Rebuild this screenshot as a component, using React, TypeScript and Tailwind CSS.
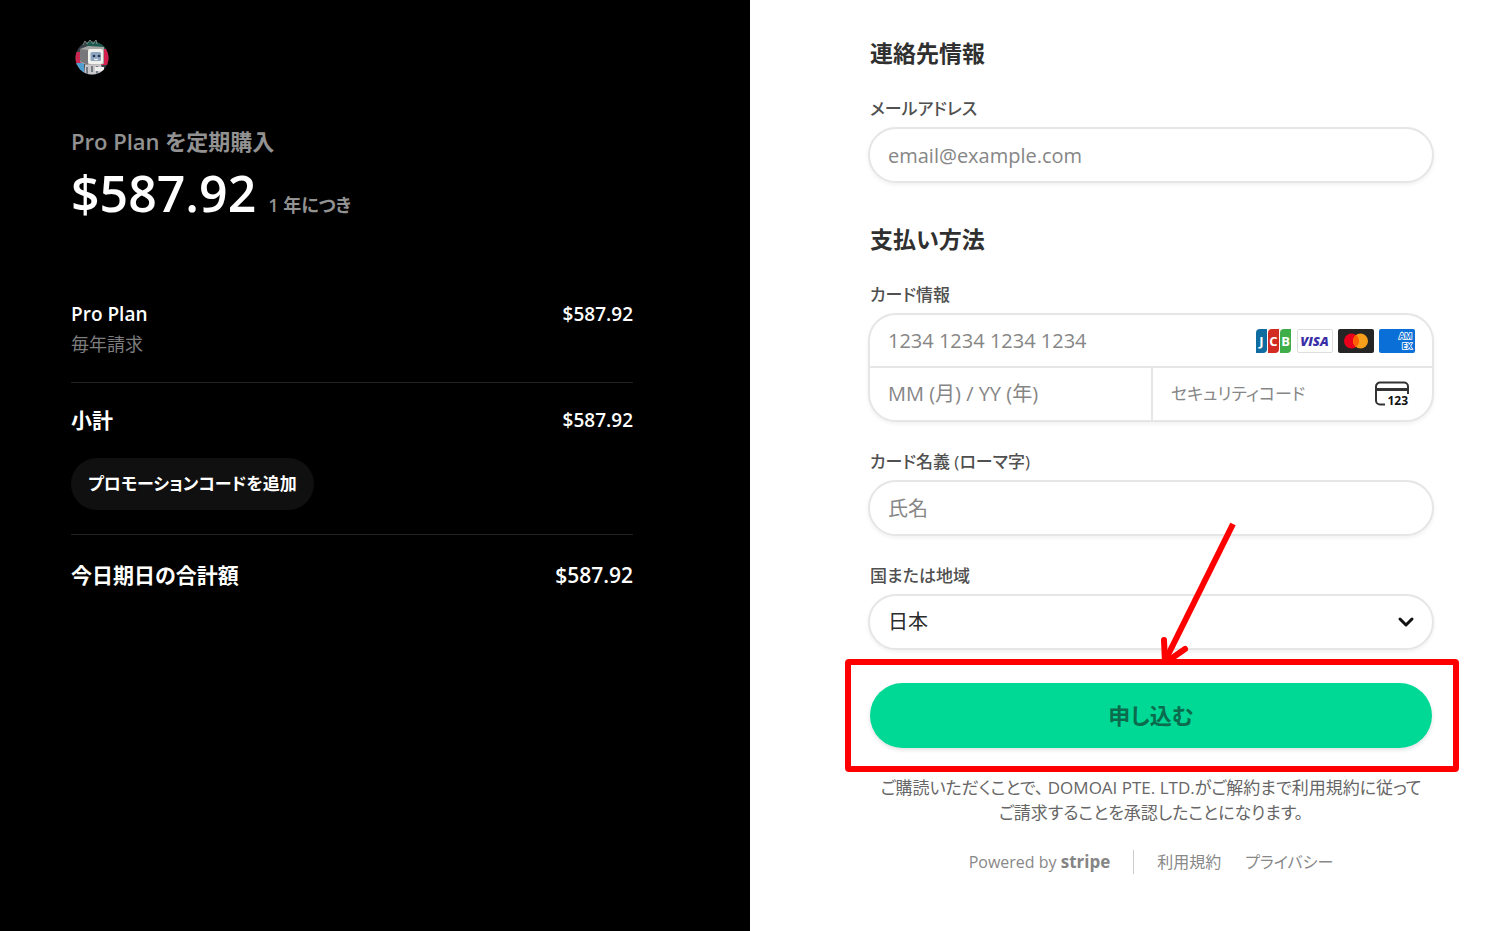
import { useState, type ReactNode } from "react";
import { ChevronDown } from "lucide-react";

const amount = "$587.92";

const inputBase = "w-full bg-transparent px-[18px] text-[#2b2b2b] outline-none placeholder:text-[#868686]";
const box = "border-2 border-[#e6e6e6] bg-white shadow-[0_2px_4px_rgba(0,0,0,0.06)]";

function BrandLogo() {
  return (
    <svg className="ml-1 size-[34px] overflow-visible" viewBox="0 0 34 34" role="img" aria-label="DomoAI">
      <defs>
        <clipPath id="brand-clip">
          <circle cx="17" cy="17" r="16.5" />
        </clipPath>
      </defs>
      <g clipPath="url(#brand-clip)">
        <rect width="34" height="34" fill="#39424a" />
        <path d="M12 0h22v10H12z" fill="#1c5a50" />
        <path d="M26 8h8v16h-8z" fill="#d3204f" />
        <path d="M0 11h7v13H0z" fill="#c92850" />
        <path d="M0 22h9v12H3z" fill="#4f9fd0" />
        <path d="M5 8l8-3 16 1v17l-16 2-8-4z" fill="#a8a6a4" />
        <path d="M5 8l8 1v15l-8-4z" fill="#77777c" />
        <rect x="13" y="8" width="15" height="15" rx="2" fill="#f1f1ee" />
        <rect x="15.5" y="11" width="10.5" height="9" rx="1.5" fill="#8ea5bf" />
        <circle cx="19" cy="15" r="1.3" fill="#26334e" />
        <circle cx="24" cy="15" r="1.3" fill="#26334e" />
        <path d="M19 18q2 1.5 4 0" stroke="#fff" fill="none" />
        <path d="M10 24l16-1 2 11H9z" fill="#c9c7ca" />
        <path d="M12 26v8M17 25v6M22 25v8" stroke="#55606c" strokeWidth="1.5" />
        <path d="M20 26h9v4h-9z" fill="#eee" />
      </g>
      <path d="M8 4l2-4 2 3 3-4 3 4 3-4 1 4" stroke="#7f8a84" fill="none" />
    </svg>
  );
}

function JcbIcon() {
  return (
    <svg className="h-6 w-9" viewBox="0 0 36 24" role="img" aria-label="JCB">
      <path d="M4 0h7v20a4 4 0 0 1-4 4H0V4a4 4 0 0 1 4-4z" fill="#0f6ca0" />
      <path d="M16 0h7v20a4 4 0 0 1-4 4h-7V4a4 4 0 0 1 4-4z" fill="#d22b22" />
      <path d="M28 0h7v20a4 4 0 0 1-4 4h-7V4a4 4 0 0 1 4-4z" fill="#3fae49" />
      <g fill="#fff" fontFamily="Open Sans, sans-serif" fontWeight="700" fontSize="13" textAnchor="middle">
        <text x="5.5" y="17">J</text>
        <text x="17.5" y="17">C</text>
        <text x="29.5" y="17">B</text>
      </g>
    </svg>
  );
}

function VisaIcon() {
  return (
    <svg className="h-6 w-9" viewBox="0 0 36 24" role="img" aria-label="Visa">
      <rect x="0.5" y="0.5" width="35" height="23" rx="1.5" fill="#fff" stroke="#dedede" />
      <text
        x="17.5"
        y="16.5"
        fill="#3a2fa8"
        fontFamily="Open Sans, sans-serif"
        fontStyle="italic"
        fontWeight="800"
        fontSize="13"
        textAnchor="middle"
      >
        VISA
      </text>
    </svg>
  );
}

function MastercardIcon() {
  return (
    <svg className="h-6 w-9" viewBox="0 0 36 24" role="img" aria-label="Mastercard">
      <rect width="36" height="24" rx="2" fill="#252525" />
      <circle cx="13.5" cy="12" r="7.5" fill="#eb001b" />
      <circle cx="22.5" cy="12" r="7.5" fill="#f79e1b" />
      <path d="M18 6a7.5 7.5 0 0 1 0 12 7.5 7.5 0 0 1 0-12z" fill="#ff5f00" />
    </svg>
  );
}

function AmexIcon() {
  return (
    <svg className="h-6 w-9" viewBox="0 0 36 24" role="img" aria-label="American Express">
      <rect width="36" height="24" rx="2" fill="#0a6fd6" />
      <text
        fill="#0a6fd6"
        stroke="#fff"
        strokeWidth="1.6"
        paintOrder="stroke"
        fontFamily="Open Sans, sans-serif"
        fontWeight="700"
        fontSize="8"
      >
        <tspan x="20" y="10">AM</tspan>
        <tspan x="23" y="20">EX</tspan>
      </text>
    </svg>
  );
}

function CvcIcon() {
  return (
    <svg className="h-[30px] w-9 shrink-0" viewBox="0 -2 36 30" aria-hidden="true">
      <path
        d="M11 23.5H6a4 4 0 0 1-4-4V5.5a4 4 0 0 1 4-4h24a4 4 0 0 1 4 4V13"
        fill="none"
        stroke="#333"
        strokeWidth="2"
      />
      <path d="M2 8.5h32" stroke="#333" strokeWidth="3" />
      <text x="13.5" y="24" fill="#111" fontFamily="Open Sans, sans-serif" fontWeight="700" fontSize="12">
        123
      </text>
    </svg>
  );
}

function Label({ htmlFor, children }: { htmlFor: string; children: ReactNode }) {
  return (
    <label
      htmlFor={htmlFor}
      className="mt-7 mb-1.5 block px-0.5 text-[17px] leading-6 font-medium whitespace-nowrap text-[#505050]"
    >
      {children}
    </label>
  );
}

function Summary() {
  return (
    <section className="flex justify-end bg-black pt-[41px] pr-[117px] pl-6 text-white">
      <div className="w-full max-w-[562px]">
        <BrandLogo />
        <h1 className="mt-[50px] text-[22px] leading-8 font-semibold text-[#929292]">Pro Plan を定期購入</h1>
        <p className="flex items-baseline gap-3 leading-[72px]">
          <span className="text-[50px] font-semibold">{amount}</span>
          <span className="text-[18px] font-semibold text-[#929292]">1 年につき</span>
        </p>

        <div className="mt-[57px] flex justify-between text-[19px] leading-8 font-semibold">
          <span>Pro Plan</span>
          <span>{amount}</span>
        </div>
        <p className="text-[18px] leading-7 text-[#7d7d7d]">毎年請求</p>

        <div className="mt-6 flex justify-between border-t border-[#222] pt-[21px] leading-8 font-semibold">
          <span className="text-[21px]">小計</span>
          <span className="text-[19px]">{amount}</span>
        </div>
        <button
          type="button"
          className="mt-[22px] h-[52px] rounded-full bg-[#101010] px-[17px] text-[17px] font-semibold whitespace-nowrap"
        >
          プロモーションコードを追加
        </button>

        <div className="mt-6 flex justify-between border-t border-[#222] pt-6 text-[21px] leading-8 font-semibold">
          <span>今日期日の合計額</span>
          <span>{amount}</span>
        </div>
      </div>
    </section>
  );
}

function Callout() {
  return (
    <div className="pointer-events-none absolute -inset-y-6 -right-[25px] -left-[23px] rounded-sm border-6 border-[#fe0000]">
      <svg className="absolute bottom-full left-1/2 h-36 w-24" viewBox="0 0 96 144" aria-hidden="true">
        <path d="M81 3L13 140" stroke="#fe0000" strokeWidth="6" fill="none" />
        <path d="M12 119L13 142L33 128" stroke="#fe0000" strokeWidth="6" strokeLinecap="round" fill="none" />
      </svg>
    </div>
  );
}

function PaymentForm() {
  const [country, setCountry] = useState("JP");

  return (
    <section className="bg-white pt-[37px] pr-6 pb-10 pl-[118px]">
      <form className="w-full max-w-[566px]" onSubmit={(e) => e.preventDefault()}>
        <h2 className="px-0.5 text-[23px] leading-8 font-semibold text-[#303030]">連絡先情報</h2>
        <Label htmlFor="email">メールアドレス</Label>
        <input
          id="email"
          type="email"
          placeholder="email@example.com"
          className={`${inputBase} ${box} block h-14 rounded-full text-[20px]`}
        />

        <h2 className="mt-10 px-0.5 text-[23px] leading-8 font-semibold text-[#303030]">支払い方法</h2>
        <Label htmlFor="card">カード情報</Label>
        <div className={`${box} h-[109px] rounded-[28px]`}>
          <div className="flex h-[53px] items-center border-b-2 border-[#e6e6e6] pr-[17px]">
            <input
              id="card"
              placeholder="1234 1234 1234 1234"
              className={`${inputBase} min-w-0 flex-1 text-[20px]`}
            />
            <div className="flex gap-[5px]">
              <JcbIcon />
              <VisaIcon />
              <MastercardIcon />
              <AmexIcon />
            </div>
          </div>
          <div className="grid h-[52px] grid-cols-2">
            <input
              aria-label="有効期限"
              placeholder="MM (月) / YY (年)"
              className={`${inputBase} text-[20px]`}
            />
            <div className="flex items-center border-l-2 border-[#e6e6e6] pr-[22px]">
              <input
                aria-label="セキュリティコード"
                placeholder="セキュリティコード"
                className={`${inputBase} min-w-0 flex-1 text-[17px]`}
              />
              <CvcIcon />
            </div>
          </div>
        </div>

        <Label htmlFor="name">カード名義 (ローマ字)</Label>
        <input
          id="name"
          placeholder="氏名"
          className={`${inputBase} ${box} block h-14 rounded-full text-[20px]`}
        />

        <Label htmlFor="country">国または地域</Label>
        <div className="relative">
          <select
            id="country"
            value={country}
            onChange={(e) => setCountry(e.target.value)}
            className={`${inputBase} ${box} block h-14 appearance-none rounded-full text-[20px]`}
          >
            <option value="JP">日本</option>
            <option value="US">アメリカ合衆国</option>
          </select>
          <ChevronDown
            className="pointer-events-none absolute top-4 right-4 size-6 text-[#111]"
            strokeWidth={3}
          />
        </div>

        <div className="relative mt-[33px]">
          <button
            type="submit"
            className="mx-0.5 block h-[65px] w-[calc(100%-4px)] rounded-full bg-[#00d996] text-[22px] font-semibold text-[#0b6b4c] shadow-[0_2px_4px_rgba(0,0,0,0.12)]"
          >
            申し込む
          </button>
          <Callout />
        </div>

        <p className="mt-[27px] text-center text-[17px] leading-[25px] whitespace-nowrap text-[#666]">
          ご購読いただくことで、 DOMOAI PTE. LTD.がご解約まで利用規約に従って
          <br />
          ご請求することを承認したことになります。
        </p>

        <footer className="mt-[25px] flex items-center justify-center text-[16px] leading-6 whitespace-nowrap text-[#888]">
          <a href="#stripe">
            Powered by <span className="text-[17px] font-bold text-[#858585]">stripe</span>
          </a>
          <span className="mx-[23px] h-6 w-px bg-[#ccc]" />
          <a href="#terms">利用規約</a>
          <a href="#privacy" className="ml-6">
            プライバシー
          </a>
        </footer>
      </form>
    </section>
  );
}

export default function App() {
  return (
    <main
      lang="ja"
      className="grid min-h-screen grid-cols-2 overflow-x-hidden font-['Open_Sans','Noto_Sans_CJK_JP',sans-serif] [font-feature-settings:'palt']"
    >
      <Summary />
      <PaymentForm />
    </main>
  );
}
